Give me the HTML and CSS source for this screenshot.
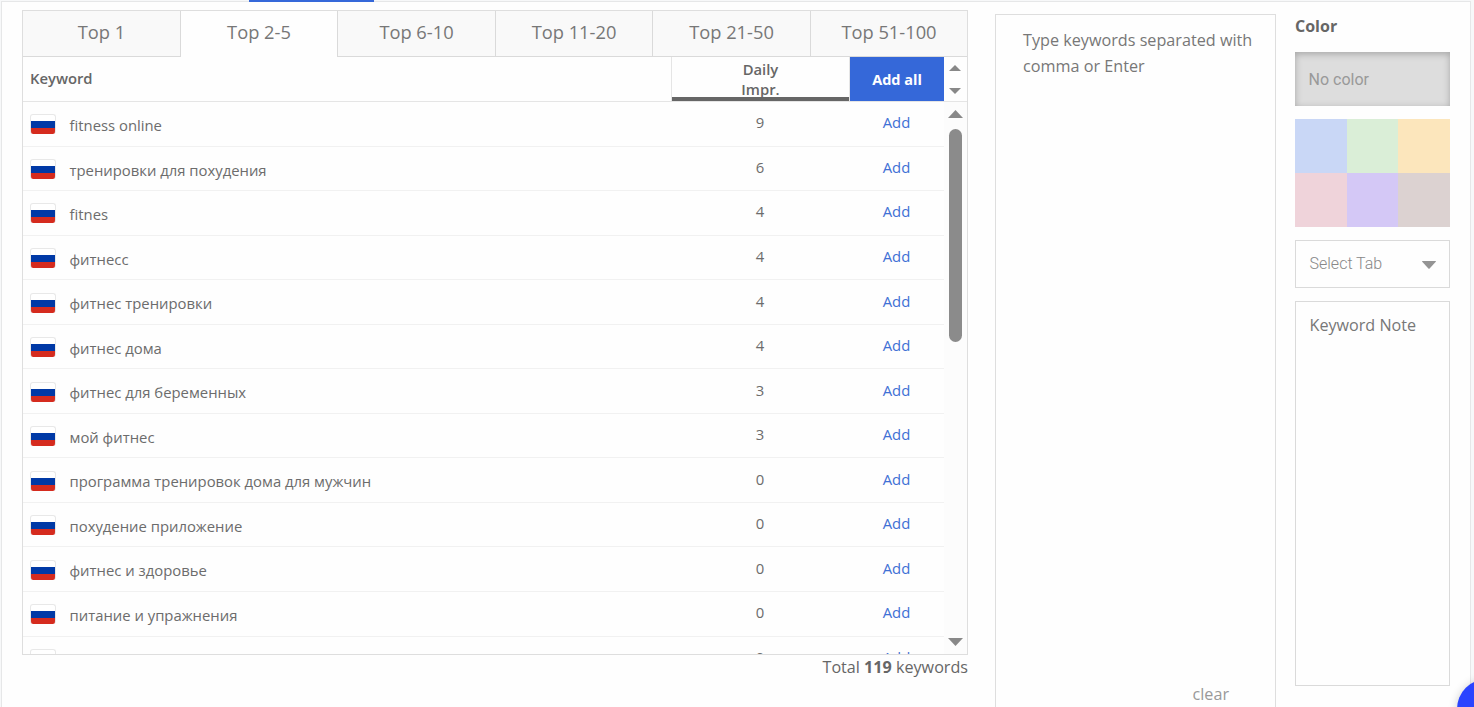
FILE: index.html
```html
<!DOCTYPE html>
<html lang="en">
<head>
    <meta charset="UTF-8">
    <meta name="viewport" content="width=device-width, initial-scale=1.0">
    <title>Add Keywords</title>
    <link rel="stylesheet" href="styles.css">
</head>
<body>
    <div class="top-line"><div class="top-line-active"></div></div>

    <main class="panel">
        <section class="suggestions">
            <div class="keyword-box">
                <nav class="tabs">
                    <div class="tab">Top 1</div>
                    <div class="tab active">Top 2-5</div>
                    <div class="tab">Top 6-10</div>
                    <div class="tab">Top 11-20</div>
                    <div class="tab">Top 21-50</div>
                    <div class="tab">Top 51-100</div>
                </nav>

                <div class="table-head">
                    <div class="head-keyword">Keyword</div>
                    <div class="head-impr">Daily<br>Impr.</div>
                    <button type="button" class="add-all">Add all</button>
                    <div class="head-arrows">
                        <svg width="12" height="6" viewBox="0 0 12 6"><path d="M0 6L6 0L12 6Z"/></svg>
                        <svg width="12" height="6" viewBox="0 0 12 6"><path d="M0 0L6 6L12 0Z"/></svg>
                    </div>
                </div>

                <div class="table-body">
                    <div class="rows" id="rows"></div>
                    <div class="scrollbar">
                        <svg width="15" height="8" viewBox="0 0 15 8"><path d="M0 8L7.5 0L15 8Z"/></svg>
                        <div class="scroll-thumb"></div>
                        <svg class="scroll-down" width="15" height="8" viewBox="0 0 15 8"><path d="M0 0L7.5 8L15 0Z"/></svg>
                    </div>
                </div>
            </div>
            <p class="total">Total <b>119</b> keywords</p>
        </section>

        <section class="typing">
            <p class="typing-hint">Type keywords separated with comma or Enter</p>
            <a class="clear">clear</a>
        </section>

        <aside class="options">
            <h2>Color</h2>
            <div class="no-color">No color</div>
            <div class="colors">
                <div class="color blue"></div>
                <div class="color green"></div>
                <div class="color yellow"></div>
                <div class="color pink"></div>
                <div class="color purple"></div>
                <div class="color brown"></div>
            </div>
            <div class="select-tab">
                <span>Select Tab</span>
                <svg width="14" height="8" viewBox="0 0 14 8"><path d="M0 0.5Q0 0 0.5 0H13.5Q14 0 14 0.5L7.6 7.6Q7 8 6.4 7.6Z"/></svg>
            </div>
            <div class="note">Keyword Note</div>
        </aside>
    </main>

    <div class="chat-button"></div>

    <script>
        const keywords = [
            ['fitness online', 9],
            ['тренировки для похудения', 6],
            ['fitnes', 4],
            ['фитнесс', 4],
            ['фитнес тренировки', 4],
            ['фитнес дома', 4],
            ['фитнес для беременных', 3],
            ['мой фитнес', 3],
            ['программа тренировок дома для мужчин', 0],
            ['похудение приложение', 0],
            ['фитнес и здоровье', 0],
            ['питание и упражнения', 0],
            ['', 0]
        ];

        const rows = document.getElementById('rows');

        keywords.forEach(([name, impressions]) => {
            const row = document.createElement('div');
            row.className = 'row';
            row.innerHTML = `
                <div class="flag"></div>
                <div class="name">${name}</div>
                <div class="impr">${impressions}</div>
                <a class="add">Add</a>`;
            rows.appendChild(row);
        });
    </script>
</body>
</html>
```
FILE: styles.css
```css
* {
    box-sizing: border-box;
}

body {
    margin: 0;
    height: 707px;
    overflow: hidden;
    background: #f7f8f9;
    font-family: "Open Sans", "Noto Sans", sans-serif;
    color: #666666;
}

.top-line {
    height: 1px;
    padding-left: 249px;
}

.top-line-active {
    position: relative;
    width: 125px;
    height: 2px;
    background: #3568d9;
}

.panel {
    display: flex;
    align-items: flex-start;
    width: 1470px;
    height: 720px;
    margin-left: 1px;
    padding: 9px 0 0 20px;
    background: #fefefe;
    border: 1px solid #e6e7e8;
}

/* Keyword table */
.suggestions {
    width: 946px;
}

.keyword-box {
    display: flex;
    flex-direction: column;
    height: 645px;
    margin-top: -1px;
    border: 1px solid #dedede;
}

.tabs {
    display: grid;
    grid-template-columns: 158px 157px 158px 157px 158px 1fr;
    height: 46px;
}

.tab {
    padding-top: 8px;
    text-align: center;
    font-size: 18.3px;
    line-height: 25px;
    color: #777777;
    background: #f9f9f9;
    border-right: 1px solid #dadada;
    border-bottom: 1px solid #dadada;
}

.tab:last-child {
    border-right: none;
}

.tab.active {
    background: #fefefe;
    border-bottom: none;
}

.table-head {
    display: flex;
    height: 45px;
    border-bottom: 1px solid #e5e5e5;
    font-size: 14.8px;
    font-weight: 600;
}

.head-keyword {
    flex: 1;
    padding-left: 7px;
    line-height: 43px;
}

.head-impr {
    width: 179px;
    padding-top: 2px;
    border-left: 1px solid #e5e5e5;
    border-right: 1px solid #e5e5e5;
    box-shadow: inset 0 -4px 0 #666666;
    text-align: center;
    line-height: 20px;
}

.add-all {
    width: 94px;
    padding: 0;
    border: none;
    background: #3568d9;
    color: #ffffff;
    font-family: inherit;
    font-size: 14.5px;
    font-weight: 700;
}

.head-arrows {
    display: flex;
    flex-direction: column;
    align-items: center;
    gap: 17px;
    width: 22px;
    margin-right: 1px;
    padding-top: 8px;
    fill: #888888;
}

.table-body {
    display: flex;
    flex: 1;
    min-height: 0;
    overflow: hidden;
}

.rows {
    flex: 1;
}

.row {
    display: flex;
    height: 44.55px;
    padding-left: 7px;
    border-bottom: 1px solid #f1f1f1;
    font-size: 14.85px;
    line-height: 20px;
    color: #6c6c6c;
}

.flag {
    width: 26px;
    height: 20px;
    margin-top: 12.4px;
    border: 1px solid #e8e8e8;
    border-bottom: none;
    border-radius: 3px;
    background: linear-gradient(#ffffff 6px, #0039a6 6px, #0039a6 13px, #d52b1e 13px);
}

.name {
    flex: 1;
    padding: 13px 0 0 13.5px;
}

.impr {
    width: 178px;
    padding-top: 10.4px;
    text-align: center;
}

.add {
    width: 95px;
    padding-top: 10.4px;
    text-align: center;
    color: #3f70d5;
}

.scrollbar {
    display: flex;
    flex-direction: column;
    align-items: center;
    width: 23px;
    padding: 8px 0;
    background: #fcfcfc;
    fill: #888888;
}

.scroll-thumb {
    width: 13px;
    height: 213px;
    margin-top: 11px;
    border-radius: 7px;
    background: #8b8b8b;
}

.scroll-down {
    margin-top: auto;
}

.total {
    margin: 1px 0 0;
    text-align: right;
    font-size: 16.15px;
    line-height: 22px;
}

/* Typed keywords */
.typing {
    display: flex;
    flex-direction: column;
    justify-content: space-between;
    width: 281px;
    height: 720px;
    margin: 3px 0 0 27px;
    padding: 12px 10px 26px 27px;
    border: 1px solid #dedede;
    font-size: 16.2px;
    line-height: 26px;
    color: #777777;
}

.typing-hint {
    margin: 0;
}

.clear {
    align-self: flex-end;
    margin-right: 36px;
    color: #999999;
}

/* Color, tab and note */
.options {
    width: 155px;
    margin-left: 19px;
    font-size: 16px;
}

.options h2 {
    margin: 4px 0 15px;
    font-size: 16px;
    line-height: 22px;
}

.no-color {
    height: 54px;
    padding-left: 13.5px;
    background: #dddddd;
    box-shadow: inset 0 2px 7px rgba(0, 0, 0, 0.25);
    font-family: Roboto, sans-serif;
    line-height: 55px;
    color: #999999;
}

.colors {
    display: grid;
    grid-template-columns: 52px 51px 52px;
    grid-auto-rows: 54px;
    margin-top: 13px;
}

.blue { background: #c9d7f6; }
.green { background: #daeed7; }
.yellow { background: #fce6bc; }
.pink { background: #efd3da; }
.purple { background: #d4c8f6; }
.brown { background: #dcd2d1; }

.select-tab {
    display: flex;
    align-items: center;
    justify-content: space-between;
    height: 48px;
    margin-top: 13px;
    padding: 0 13px 2px 13.5px;
    border: 1px solid #dadada;
    font-family: Roboto, sans-serif;
    font-weight: 300;
    color: #888888;
}

.select-tab svg {
    margin-top: 3px;
    fill: #949494;
}

.note {
    height: 385px;
    margin-top: 13px;
    padding: 12px 13.5px;
    border: 1px solid #dadada;
    font-size: 16.15px;
    line-height: 22px;
    color: #777777;
}

/* Floating over the page corner */
.chat-button {
    position: fixed;
    top: 679px;
    left: 1457px;
    width: 60px;
    height: 60px;
    border-radius: 50%;
    background: #2a44ff;
    box-shadow: 0 1px 10px rgba(0, 0, 0, 0.2);
}
```
